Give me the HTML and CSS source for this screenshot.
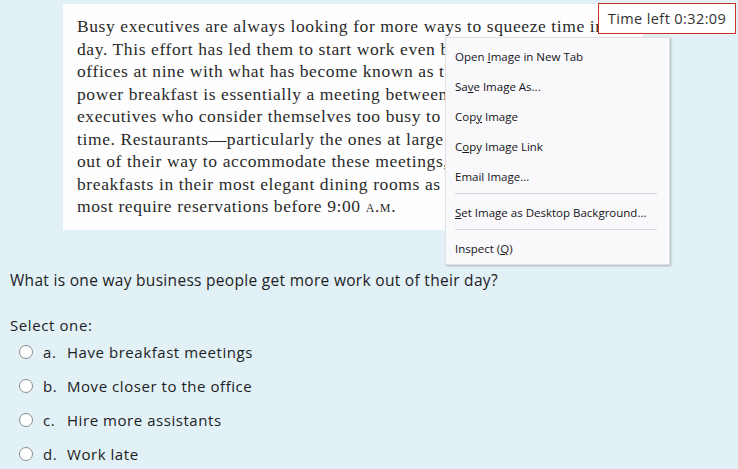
FILE: index.html
```html
<!DOCTYPE html>
<html lang="en">
<head>
    <meta charset="UTF-8">
    <meta name="viewport" content="width=device-width, initial-scale=1.0">
    <title>Quiz</title>
    <link rel="stylesheet" href="styles.css">
</head>
<body>
    <div class="timer">Time left 0:32:09</div>

    <div class="passage">
        <p>Busy executives are always looking for more ways to squeeze time into their</p>
        <p>day. This effort has led them to start work even before they reach their</p>
        <p>offices at nine with what has become known as the power breakfast. The</p>
        <p>power breakfast is essentially a meeting between two or more</p>
        <p>executives who consider themselves too busy to get together at any other</p>
        <p>time. Restaurants&mdash;particularly the ones at large hotels&mdash;have gone</p>
        <p>out of their way to accommodate these meetings, serving power</p>
        <p>breakfasts in their most elegant dining rooms as early as 7:00 and</p>
        <p>most require reservations before 9:00 <span class="sc">a.m.</span></p>
    </div>

    <div class="question">
        <div class="qtext">What is one way business people get more work out of their day?</div>
        <div class="prompt">Select one:</div>
        <div class="answers">
            <label class="answer"><span class="radio"></span><span class="letter">a.</span>Have breakfast meetings</label>
            <label class="answer"><span class="radio"></span><span class="letter">b.</span>Move closer to the office</label>
            <label class="answer"><span class="radio"></span><span class="letter">c.</span>Hire more assistants</label>
            <label class="answer"><span class="radio"></span><span class="letter">d.</span>Work late</label>
        </div>
    </div>

    <div class="menu">
        <div class="menu-item">Open <u>I</u>mage in New Tab</div>
        <div class="menu-item">Sa<u>v</u>e Image As...</div>
        <div class="menu-item">Cop<u>y</u> Image</div>
        <div class="menu-item">C<u>o</u>py Image Link</div>
        <div class="menu-item">Email Ima<u>g</u>e...</div>
        <div class="menu-sep"></div>
        <div class="menu-item"><u>S</u>et Image as Desktop Background...</div>
        <div class="menu-sep"></div>
        <div class="menu-item">Inspect (<u>Q</u>)</div>
    </div>
</body>
</html>
```

FILE: styles.css
```css
body {
    margin: 0;
    background-color: #e1f1f5;
    font-family: "Open Sans", Arial, sans-serif;
    color: #1d2125;
    height: 469px;
    overflow: hidden;
}
.passage {
    margin: 4px 0 0 63px;
    width: 580px;
    height: 226px;
    box-sizing: border-box;
    padding: 11px 0 0 14px;
    background-color: #fefefe;
    overflow: hidden;
}
.passage p {
    margin: 0;
    white-space: nowrap;
    font-family: "Liberation Serif", "Times New Roman", serif;
    font-size: 17.5px;
    letter-spacing: 0.6px;
    line-height: 22.5px;
    color: #2a2a2a;
}
.sc {
    font-variant: small-caps;
}
.question {
    padding: 39px 0 0 10px;
}
.qtext {
    font-size: 15.5px;
    letter-spacing: 0.3px;
    line-height: 22px;
}
.prompt {
    margin-top: 23px;
    font-size: 15px;
    letter-spacing: 0.6px;
    line-height: 22px;
}
.answers {
    display: flex;
    flex-direction: column;
    gap: 12px;
    margin-top: 5px;
    padding-left: 9px;
}
.answer {
    display: flex;
    align-items: center;
    height: 22px;
    font-size: 15px;
    letter-spacing: 0.55px;
}
.radio {
    width: 12px;
    height: 12px;
    border: 1px solid #8a8d90;
    border-radius: 50%;
    background-color: #fff;
    margin-right: 10px;
}
.letter {
    width: 24px;
}
.timer {
    position: absolute;
    top: 3px;
    right: 2px;
    width: 138px;
    height: 31px;
    box-sizing: border-box;
    border: 1px solid #ca3120;
    background-color: #fff;
    font-size: 14.5px;
    letter-spacing: 0.4px;
    line-height: 29px;
    text-align: center;
    color: #333;
}
.menu {
    position: absolute;
    left: 445px;
    top: 37px;
    width: 225px;
    height: 228px;
    box-sizing: border-box;
    padding: 4px 0;
    background-color: #f9f9fb;
    border: 1px solid #e0e0e6;
    box-shadow: 1px 1px 2px rgba(0, 0, 0, 0.25);
    font-size: 11.5px;
    color: #15141a;
}
.menu-item {
    height: 30px;
    line-height: 30px;
    padding-left: 9px;
    white-space: nowrap;
}
.menu-sep {
    height: 1px;
    margin: 1px 12px 4px 9px;
    background-color: #d4d4d8;
}
```
